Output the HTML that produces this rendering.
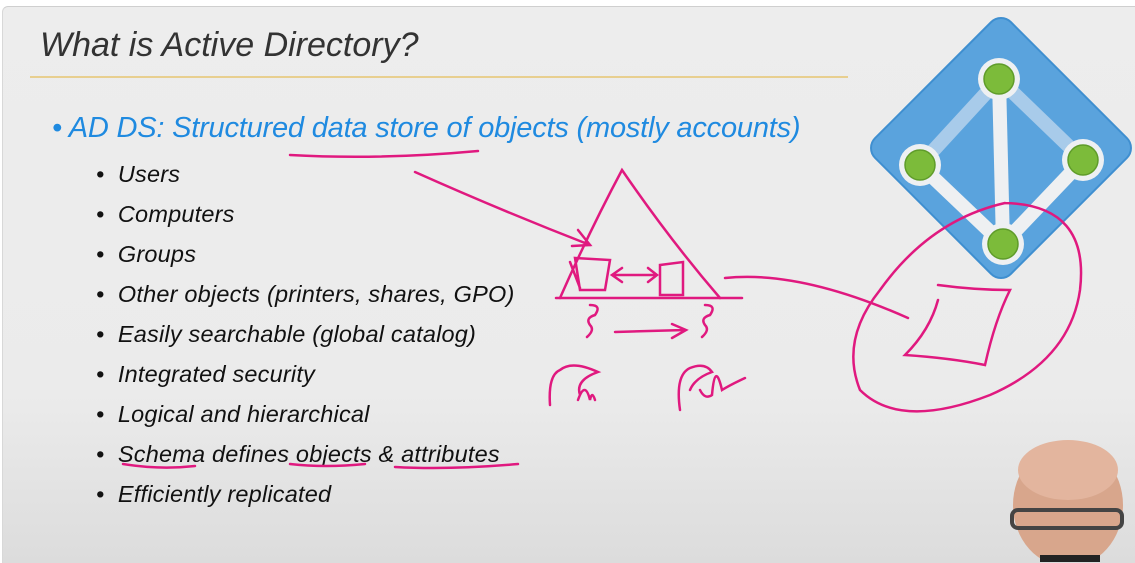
<!DOCTYPE html>
<html><head><style>
body{margin:0;width:1135px;height:562px;overflow:hidden;background:#fff;font-family:"Liberation Sans",sans-serif}
.slide{position:absolute;left:2px;top:6px;width:1133px;height:556px;border-top:1px solid #cfcfcf;border-left:1px solid #d8d8d8;border-radius:6px 0 0 0;background:linear-gradient(#ededed 0%,#ebebeb 70%,#dcdcdc 100%)}
.t{position:absolute;font-style:italic;white-space:nowrap}
</style></head><body>
<div class="slide"></div>
<div class="t" style="left:40px;top:26px;font-size:34px;color:#333;letter-spacing:0px">What is Active Directory?</div>
<div style="position:absolute;left:30px;top:76px;width:818px;height:2px;background:#e8cf8f"></div>
<div class="t" style="left:52px;top:112px;font-size:29px;color:#1f8ae0;letter-spacing:-0.2px">• AD DS: Structured data store of objects (mostly accounts)</div>
<div style="position:absolute;left:96px;top:154px;font-size:23.5px;color:#111;line-height:40px;font-style:italic;letter-spacing:0.2px;white-space:nowrap">
<div>•&nbsp; Users</div><div>•&nbsp; Computers</div><div>•&nbsp; Groups</div><div>•&nbsp; Other objects (printers, shares, GPO)</div><div>•&nbsp; Easily searchable (global catalog)</div><div>•&nbsp; Integrated security</div><div>•&nbsp; Logical and hierarchical</div><div>•&nbsp; Schema defines objects &amp; attributes</div><div>•&nbsp; Efficiently replicated</div></div>
<svg width="1135" height="562" style="position:absolute;left:0;top:0">
<g transform="translate(1001,148) rotate(45)">
<rect x="-96" y="-96" width="192" height="192" rx="14" fill="#5aa3dd" stroke="#3f8fd0" stroke-width="2"/>
</g>
<g stroke="#a8cbea" stroke-width="14" fill="none"><line x1="999" y1="79" x2="920" y2="165"/><line x1="999" y1="79" x2="1083" y2="160"/></g>
<g stroke="#eef0f2" stroke-width="14" fill="none"><line x1="999" y1="79" x2="1003" y2="244"/><line x1="920" y1="165" x2="1003" y2="244"/><line x1="1083" y1="160" x2="1003" y2="244"/></g>
<g fill="#eef0f2"><circle cx="999" cy="79" r="21"/><circle cx="920" cy="165" r="21"/><circle cx="1083" cy="160" r="21"/><circle cx="1003" cy="244" r="21"/></g>
<g fill="#7cbb3a" stroke="#5f9c2a" stroke-width="1.5"><circle cx="999" cy="79" r="15"/><circle cx="920" cy="165" r="15"/><circle cx="1083" cy="160" r="15"/><circle cx="1003" cy="244" r="15"/></g>
<g stroke="#e0197f" stroke-width="2.5" fill="none" stroke-linecap="round">
<path d="M290 155 Q380 160 478 151"/>
<path d="M415 172 Q500 210 590 245"/><path d="M578 230 L590 245 L572 246"/>
<path d="M560 298 Q590 230 622 170 Q670 240 720 298"/><path d="M556 298 L742 298"/>
<path d="M575 258 L610 260 L605 290 L580 290 Z M570 262 L580 288"/>
<path d="M660 265 L683 262 L683 295 L660 295 Z"/>
<path d="M615 275 L655 275 M622 268 L612 275 L622 282 M648 268 L657 275 L648 282"/>
<path d="M590 305 q12 0 5 10 q-10 3 -5 10 q5 5 -3 12 M705 305 q12 0 5 10 q-10 3 -5 10 q5 5 -3 12"/>
<path d="M615 332 L685 330 M672 324 L686 330 L672 338"/>
<path d="M550 405 Q548 375 560 370 Q572 360 598 372 Q575 380 580 395 M578 400 Q585 380 590 400 Q592 390 595 400"/>
<path d="M680 410 Q675 375 690 368 Q705 362 712 372 Q695 378 690 390 M700 390 Q705 400 712 395 Q715 360 722 390 Q730 385 745 378"/>
<path d="M123 464 Q160 470 195 466 M290 464 Q325 468 365 464 M395 467 Q450 470 518 464"/>
<path d="M725 278 Q800 270 908 318"/>
<path d="M938 285 Q975 290 1010 290 Q995 320 985 365 Q950 358 905 355 Q930 330 938 300"/>
<path d="M1005 203 Q1090 205 1080 290 Q1070 360 990 395 Q900 430 860 390 Q840 340 880 290 Q930 220 1005 203"/>
</g>
<ellipse cx="1068" cy="505" rx="55" ry="62" fill="#d8a68c"/>
<ellipse cx="1068" cy="470" rx="50" ry="30" fill="#e3b59e"/>
<rect x="1012" y="510" width="110" height="18" rx="6" fill="none" stroke="#444" stroke-width="4"/>
<rect x="1040" y="555" width="60" height="7" fill="#222"/>
</svg>
</body></html>
